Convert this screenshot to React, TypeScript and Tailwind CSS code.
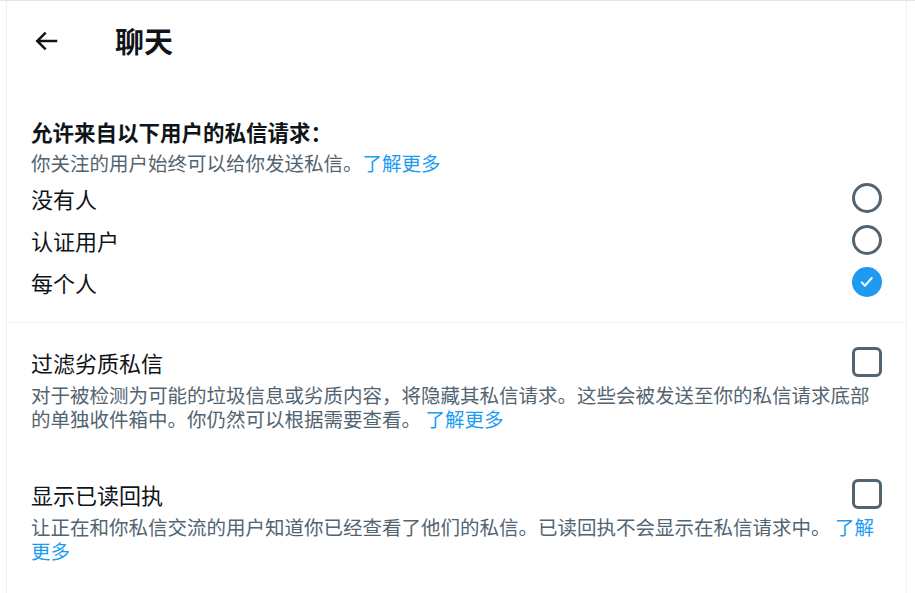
import { useState } from 'react'

const font = { fontFamily: '"Noto Sans CJK SC", "Noto Sans", sans-serif' }

const options = [
  { id: 'none', label: '没有人' },
  { id: 'verified', label: '认证用户' },
  { id: 'everyone', label: '每个人' },
]

const Radio = ({ checked }: { checked: boolean }) =>
  checked ? (
    <span className="flex size-[30px] items-center justify-center rounded-full bg-[#1d9bf0]">
      <svg viewBox="0 0 24 24" className="size-[18px]" fill="none" stroke="white" strokeWidth={2.6} strokeLinecap="round" strokeLinejoin="round">
        <path d="M5 12.5l4.2 4.5L18.5 6.5" />
      </svg>
    </span>
  ) : (
    <span className="block size-[30px] rounded-full border-[3px] border-[#536471]" />
  )

const Checkbox = () => (
  <span className="block size-[30px] rounded-[6px] border-[3px] border-[#536471]" />
)

const Toggle = ({ title, desc }: { title: string; desc: string }) => (
  <div className="px-6 pt-[24px] pb-[24px]">
    <div className="flex h-[30px] items-center justify-between">
      <span className="text-[22px] leading-[30px] text-[#0f1419]">{title}</span>
      <Checkbox />
    </div>
    <p className="mt-[6px] text-[19.5px] leading-[24px] text-[#536471]">
      {desc} <a className="text-[#1d9bf0]">了解更多</a>
    </p>
  </div>
)

export default function App() {
  const [choice, setChoice] = useState('everyone')

  return (
    <div className="min-h-[593px] border-t border-[#e4e4e4] bg-white" style={font}>
      <div className="ml-[6px] min-h-[592px] w-[901px] border-x border-[#f0f0f0]">
        <header className="flex h-[80px] items-center px-6">
          <svg viewBox="0 0 24 24" className="size-[30px] fill-[#0f1419]">
            <path d="M7.414 13l5.043 5.04-1.414 1.42L3.586 12l7.457-7.46 1.414 1.42L7.414 11H21v2H7.414z" />
          </svg>
          <h1 className="ml-[54px] text-[29px] font-bold text-[#0f1419]">聊天</h1>
        </header>

        <section className="border-b border-[#eff3f4] px-6 pt-[37px] pb-[19px]">
          <h2 className="text-[21.5px] font-bold leading-[28px] text-[#0f1419]">允许来自以下用户的私信请求：</h2>
          <p className="mt-[3px] text-[19.5px] leading-[28px] text-[#536471]">
            你关注的用户始终可以给你发送私信。<a className="text-[#1d9bf0]">了解更多</a>
          </p>
          {options.map((o) => (
            <label
              key={o.id}
              onClick={() => setChoice(o.id)}
              className="flex h-[42px] cursor-pointer items-center justify-between"
            >
              <span className="text-[22px] text-[#0f1419]">{o.label}</span>
              <Radio checked={choice === o.id} />
            </label>
          ))}
        </section>

        <Toggle
          title="过滤劣质私信"
          desc="对于被检测为可能的垃圾信息或劣质内容，将隐藏其私信请求。这些会被发送至你的私信请求底部的单独收件箱中。你仍然可以根据需要查看。"
        />
        <Toggle
          title="显示已读回执"
          desc="让正在和你私信交流的用户知道你已经查看了他们的私信。已读回执不会显示在私信请求中。"
        />
      </div>
    </div>
  )
}
